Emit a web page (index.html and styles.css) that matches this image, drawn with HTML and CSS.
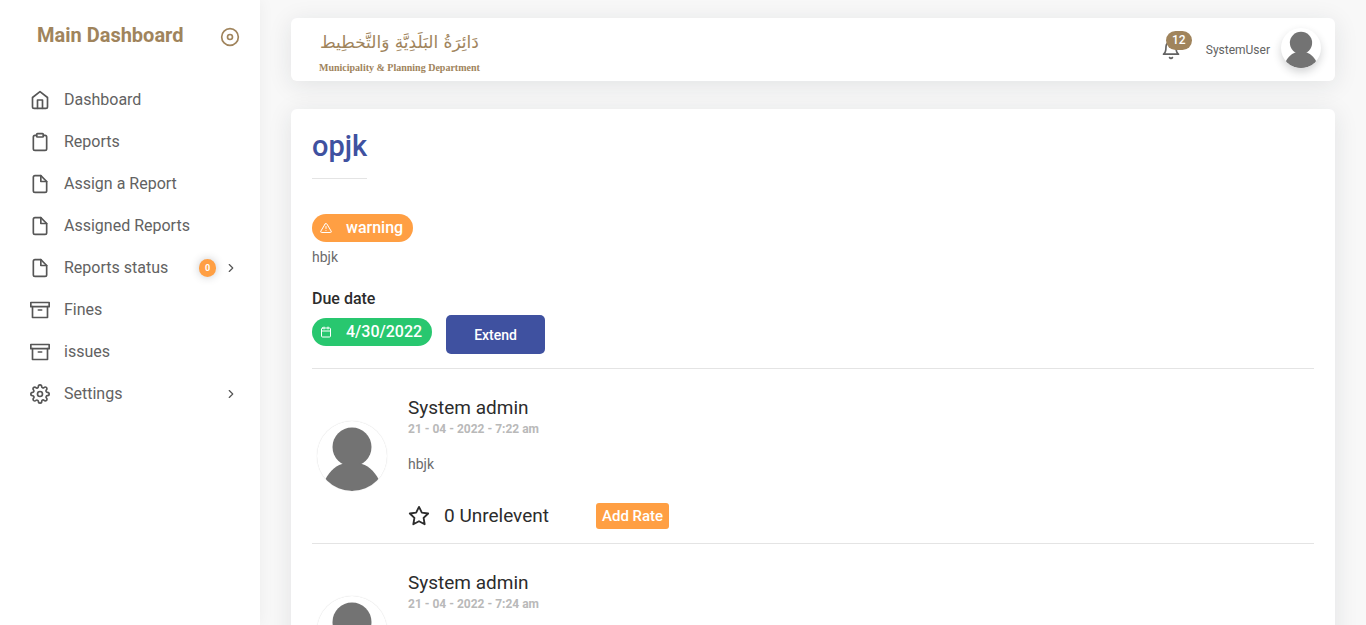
FILE: index.html
```html
<!DOCTYPE html>
<html lang="en">
<head>
<meta charset="utf-8">
<title>Main Dashboard</title>
<link rel="stylesheet" href="styles.css">
</head>
<body>
<svg class="defs" aria-hidden="true">
  <symbol id="file" viewBox="0 0 24 24"><path d="M13 2H6a2 2 0 0 0-2 2v16a2 2 0 0 0 2 2h12a2 2 0 0 0 2-2V9z"/><path d="M13 2v7h7"/></symbol>
  <symbol id="archive" viewBox="0 0 24 24"><path d="M21 8v13H3V8"/><path d="M1 3h22v5H1z"/><path d="M10 12h4"/></symbol>
  <symbol id="chevron" viewBox="0 0 24 24"><path d="M9 18l6-6-6-6"/></symbol>
  <symbol id="star" viewBox="0 0 24 24"><path d="M12 2l3.09 6.26L22 9.27l-5 4.87 1.18 6.88L12 17.77l-6.18 3.25L7 14.14 2 9.27l6.91-1.01z"/></symbol>
  <symbol id="person" viewBox="0 0 70 70"><circle cx="35" cy="26" r="19.5"/><path d="M8 59C13 49 20 44 28 42h14c8 2 15 7 20 17C55 67 45 70 35 70S15 67 8 59z"/></symbol>
</svg>
<div class="app">
  <aside class="sidebar">
    <div class="brand">
      <a class="brand-name" href="#">Main Dashboard</a>
      <button class="pin" aria-label="Toggle menu"><svg class="icon" viewBox="0 0 24 24"><circle cx="12" cy="12" r="10"/><circle cx="12" cy="12" r="3"/></svg></button>
    </div>
    <nav>
      <ul class="menu">
        <li><a href="#"><svg class="icon" viewBox="0 0 24 24"><path d="M3 9l9-7 9 7v11a2 2 0 0 1-2 2H5a2 2 0 0 1-2-2z"/><path d="M9 22V12h6v10"/></svg><span>Dashboard</span></a></li>
        <li><a href="#"><svg class="icon" viewBox="0 0 24 24"><path d="M16 4h2a2 2 0 0 1 2 2v14a2 2 0 0 1-2 2H6a2 2 0 0 1-2-2V6a2 2 0 0 1 2-2h2"/><rect x="8" y="2" width="8" height="4" rx="1"/></svg><span>Reports</span></a></li>
        <li><a href="#"><svg class="icon"><use href="#file"/></svg><span>Assign a Report</span></a></li>
        <li><a href="#"><svg class="icon"><use href="#file"/></svg><span>Assigned Reports</span></a></li>
        <li><a href="#"><svg class="icon"><use href="#file"/></svg><span>Reports status</span><span class="count">0</span><svg class="icon chevron"><use href="#chevron"/></svg></a></li>
        <li><a href="#"><svg class="icon"><use href="#archive"/></svg><span>Fines</span></a></li>
        <li><a href="#"><svg class="icon"><use href="#archive"/></svg><span>issues</span></a></li>
        <li><a href="#"><svg class="icon" viewBox="0 0 24 24"><circle cx="12" cy="12" r="3"/><path d="M19.4 15a1.65 1.65 0 0 0 .33 1.82l.06.06a2 2 0 0 1 0 2.83 2 2 0 0 1-2.83 0l-.06-.06a1.65 1.65 0 0 0-1.82-.33 1.65 1.65 0 0 0-1 1.51V21a2 2 0 0 1-2 2 2 2 0 0 1-2-2v-.09A1.65 1.65 0 0 0 9 19.4a1.65 1.65 0 0 0-1.82.33l-.06.06a2 2 0 0 1-2.83 0 2 2 0 0 1 0-2.83l.06-.06a1.65 1.65 0 0 0 .33-1.82 1.65 1.65 0 0 0-1.51-1H3a2 2 0 0 1-2-2 2 2 0 0 1 2-2h.09A1.65 1.65 0 0 0 4.6 9a1.65 1.65 0 0 0-.33-1.82l-.06-.06a2 2 0 0 1 0-2.83 2 2 0 0 1 2.83 0l.06.06a1.65 1.65 0 0 0 1.82.33H9a1.65 1.65 0 0 0 1-1.51V3a2 2 0 0 1 2-2 2 2 0 0 1 2 2v.09a1.65 1.65 0 0 0 1 1.51 1.65 1.65 0 0 0 1.82-.33l.06-.06a2 2 0 0 1 2.83 0 2 2 0 0 1 0 2.83l-.06.06a1.65 1.65 0 0 0-.33 1.82V9a1.65 1.65 0 0 0 1.51 1H21a2 2 0 0 1 2 2 2 2 0 0 1-2 2h-.09a1.65 1.65 0 0 0-1.51 1z"/></svg><span>Settings</span><svg class="icon chevron"><use href="#chevron"/></svg></a></li>
      </ul>
    </nav>
  </aside>
  <main class="content">
    <header class="navbar">
      <a class="logo" href="#">
        <span class="logo-ar" lang="ar" dir="rtl">دَائِرَةُ البَلَدِيَّةِ وَالتَّخطِيط</span>
        <span class="logo-en">Municipality &amp; Planning Department</span>
      </a>
      <div class="user">
        <button class="bell" aria-label="Notifications"><svg class="icon" viewBox="0 0 24 24"><path d="M18 8A6 6 0 0 0 6 8c0 7-3 9-3 9h18s-3-2-3-9"/><path d="M13.73 21a2 2 0 0 1-3.46 0"/></svg><span class="bell-count">12</span></button>
        <span class="user-name">SystemUser</span>
        <svg class="user-avatar" viewBox="0 0 70 70"><use href="#person"/></svg>
      </div>
    </header>
    <section class="card">
      <h1 class="title">opjk</h1>
      <div><span class="pill warning"><svg class="icon" viewBox="0 0 24 24"><path d="M10.29 3.86L1.82 18a2 2 0 0 0 1.71 3h16.94a2 2 0 0 0 1.71-3L13.71 3.86a2 2 0 0 0-3.42 0z"/><path d="M12 9v4M12 17h.01"/></svg>warning</span></div>
      <p class="text summary">hbjk</p>
      <h2 class="label">Due date</h2>
      <div class="due">
        <span class="pill success"><svg class="icon" viewBox="0 0 24 24"><rect x="3" y="4" width="18" height="18" rx="2"/><path d="M16 2v4M8 2v4M3 10h18"/></svg>4/30/2022</span>
        <button class="extend">Extend</button>
      </div>
      <article class="comment">
        <svg class="avatar"><use href="#person"/></svg>
        <div class="body">
          <h3 class="author">System admin</h3>
          <p class="date">21 - 04 - 2022 - 7:22 am</p>
          <p class="text">hbjk</p>
          <div class="rating"><svg class="icon"><use href="#star"/></svg><span class="score">0 Unrelevent</span><button class="rate">Add Rate</button></div>
        </div>
      </article>
      <article class="comment">
        <svg class="avatar"><use href="#person"/></svg>
        <div class="body">
          <h3 class="author">System admin</h3>
          <p class="date">21 - 04 - 2022 - 7:24 am</p>
        </div>
      </article>
    </section>
  </main>
</div>
</body>
</html>
```
FILE: styles.css
```css
* { box-sizing: border-box; }
body {
  margin: 0;
  font-family: Roboto, "Liberation Sans", sans-serif;
  font-size: 14px;
  line-height: 20px;
  color: #6e6b7b;
  background: #f8f8f8;
}
h1, h2, h3, p, ul { margin: 0; padding: 0; }
h1, h2, h3 { font-weight: 500; }
ul { list-style: none; }
a { color: inherit; text-decoration: none; }
button { border: 0; margin: 0; padding: 0; background: none; font: inherit; color: inherit; cursor: pointer; }
.defs { position: absolute; width: 0; height: 0; }
.icon {
  flex: none;
  width: 20px;
  height: 20px;
  fill: none;
  stroke: currentColor;
  stroke-width: 2;
  stroke-linecap: round;
  stroke-linejoin: round;
}

.app { display: flex; height: 100vh; }
.sidebar {
  flex: none;
  width: 260px;
  background: #fff;
  box-shadow: 0 0 15px rgba(34, 41, 47, .05);
}
.brand {
  display: flex;
  align-items: center;
  justify-content: space-between;
  padding: 23px 20px 0 37px;
  color: #a0845c;
}
.brand-name { padding-bottom: 4px; font-size: 20px; line-height: 24px; font-weight: 700; }
.pin { display: flex; }
.menu { padding: 28px 20px 0 30px; color: #565656; }
.menu a { display: flex; align-items: center; height: 42px; font-size: 16px; }
.menu a > span:not(.count) { color: #626262; }
.menu .icon { margin-right: 14px; }
.count {
  width: 17px;
  height: 18px;
  margin-left: auto;
  border-radius: 9px;
  background: #ff9f43;
  box-shadow: 0 0 8px rgba(34, 41, 47, .25);
  color: #fff;
  font-size: 9px;
  line-height: 18px;
  font-weight: 700;
  text-align: center;
}
.menu .chevron { width: 14px; height: 14px; margin: 0 2px 0 auto; }
.menu .count + .chevron { margin-left: 8px; }

.content { flex: 1; min-width: 0; padding: 18px 31px; overflow-y: auto; scrollbar-width: none; }
.navbar {
  display: flex;
  align-items: center;
  justify-content: space-between;
  height: 63px;
  padding: 0 14px 0 28px;
  border-radius: 6px;
  background: #fff;
  box-shadow: 0 4px 24px rgba(34, 41, 47, .1);
}
.logo { display: flex; flex-direction: column; align-items: center; color: #a0845c; }
.logo-ar { font-family: "DejaVu Sans", sans-serif; font-size: 17px; line-height: 36px; white-space: nowrap; }
.logo-en { font-family: "Liberation Serif", serif; font-size: 10px; line-height: 16px; font-weight: 700; }
.user { display: flex; align-items: center; color: #626262; }
.bell { position: relative; display: flex; margin-right: 25px; }
.bell-count {
  position: absolute;
  top: -9px;
  left: 5px;
  min-width: 26px;
  height: 19px;
  border-radius: 10px;
  background: #a0845c;
  color: #fff;
  font-size: 12px;
  line-height: 19px;
  font-weight: 500;
}
.user-name { margin-right: 11px; font-size: 12px; }
.user-avatar {
  width: 40px;
  height: 40px;
  margin-bottom: 4px;
  border-radius: 50%;
  background: #fff;
  box-shadow: 0 4px 8px rgba(34, 41, 47, .2);
  fill: #737373;
}

.card {
  margin-top: 28px;
  padding: 21px;
  border-radius: 6px;
  background: #fff;
  box-shadow: 0 4px 24px rgba(34, 41, 47, .1);
  min-height: 100%;
}
.title {
  width: fit-content;
  padding-bottom: 16px;
  margin-bottom: 35px;
  border-bottom: 1px solid #e4e4e4;
  color: #3f51a0;
  font-size: 29px;
  line-height: 32px;
}
.pill {
  display: inline-flex;
  align-items: center;
  gap: 14px;
  height: 28px;
  padding: 0 10px 0 8px;
  border-radius: 14px;
  color: #fff;
  font-size: 16px;
  font-weight: 500;
}
.pill .icon { width: 12px; height: 12px; }
.warning { background: #ff9f43; }
.success { background: #28c76f; }
.text { color: #6b6b6b; }
.summary { margin-top: 5px; }
.label { margin-top: 22px; color: #2c2c2c; font-size: 16px; }
.due { display: flex; align-items: center; gap: 14px; padding: 6px 0 14px; border-bottom: 1px solid #e4e4e4; }
.due .pill { margin-bottom: 5px; }
.extend {
  height: 39px;
  padding: 0 28px;
  border-radius: 5px;
  background: #3f51a0;
  color: #fff;
  font-weight: 500;
}
.comment { display: flex; align-items: center; gap: 21px; min-height: 175px; padding: 28px 0 14px 5px; border-bottom: 1px solid #e4e4e4; }
.avatar {
  flex: none;
  width: 70px;
  height: 70px;
  margin-bottom: 14px;
  border-radius: 50%;
  box-shadow: 0 0 1px #ccc;
  fill: #737373;
}
.body { align-self: flex-start; }
.author { color: #2c2c2c; font-size: 19px; line-height: 22px; font-weight: 400; }
.date { margin-bottom: 15px; color: #b9b9b9; font-size: 12px; font-weight: 700; }
.rating { display: flex; align-items: center; margin-top: 29px; color: #2c2c2c; }
.rating .icon { width: 22px; height: 22px; margin-right: 14px; }
.score { font-size: 19px; margin-right: 47px; }
.rate { height: 26px; padding: 0 6px; border-radius: 3px; background: #ff9f43; color: #fff; font-size: 15px; font-weight: 500; }
```
